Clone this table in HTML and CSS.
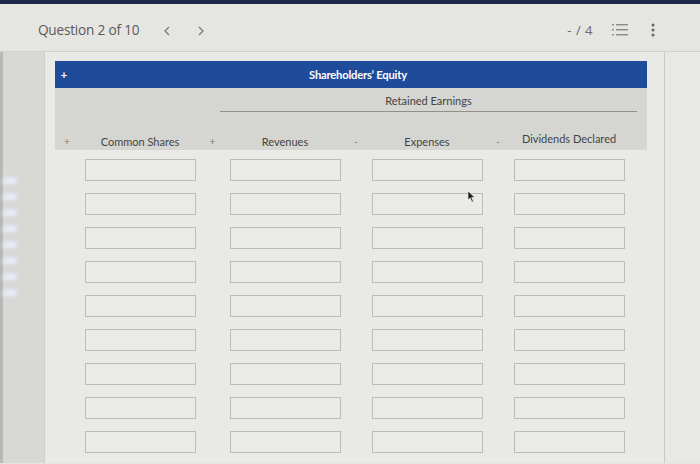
FILE: index.html
```html
<!DOCTYPE html>
<html>
<head>
<meta charset="utf-8">
<link rel="stylesheet" href="styles.css">
</head>
<body>
<div class="topbar"></div>
<header class="header">
  <div class="qtitle">Question 2 of 10</div>
  <svg class="chev" width="8" height="10" viewBox="0 0 8 10"><path d="M6 1 L2 5 L6 9" fill="none" stroke="#7a7a7a" stroke-width="1.3"/></svg>
  <svg class="chev chev2" width="8" height="10" viewBox="0 0 8 10"><path d="M2 1 L6 5 L2 9" fill="none" stroke="#7a7a7a" stroke-width="1.3"/></svg>
  <div class="spacer"></div>
  <div class="score">- / 4</div>
  <svg class="listicon" width="16" height="14" viewBox="0 0 16 14"><g fill="#8a8a8a"><rect x="0" y="1" width="2" height="1.4"/><rect x="0" y="6" width="2" height="1.4"/><rect x="0" y="11" width="2" height="1.4"/><rect x="4" y="1" width="12" height="1.4"/><rect x="4" y="6" width="12" height="1.4"/><rect x="4" y="11" width="12" height="1.4"/></g></svg>
  <svg class="kebab" width="4" height="14" viewBox="0 0 4 14"><g fill="#666"><circle cx="2" cy="2" r="1.5"/><circle cx="2" cy="7" r="1.5"/><circle cx="2" cy="12" r="1.5"/></g></svg>
</header>
<div class="main">
  <div class="gutter">
    <div class="glare"><span></span><span></span><span></span><span></span><span></span><span></span><span></span><span></span></div>
  </div>
  <section class="panel">
    <div class="ws">
      <div class="titlebar"><span class="tplus">+</span><span class="ttext">Shareholders’ Equity</span></div>
      <div class="subhead">
        <div class="re"><span>Retained Earnings</span></div>
        <div class="cols">
          <span class="sign">+</span><span class="lbl">Common Shares</span>
          <span class="sign">+</span><span class="lbl">Revenues</span>
          <span class="sign">-</span><span class="lbl">Expenses</span>
          <span class="sign">-</span><span class="lbl lbl4">Dividends Declared</span>
        </div>
      </div>
      <div class="rows">
        <div class="row"><span></span><i class="inp"></i><span></span><i class="inp"></i><span></span><i class="inp"></i><span></span><i class="inp"></i></div>
        <div class="row"><span></span><i class="inp"></i><span></span><i class="inp"></i><span></span><i class="inp"></i><span></span><i class="inp"></i></div>
        <div class="row"><span></span><i class="inp"></i><span></span><i class="inp"></i><span></span><i class="inp"></i><span></span><i class="inp"></i></div>
        <div class="row"><span></span><i class="inp"></i><span></span><i class="inp"></i><span></span><i class="inp"></i><span></span><i class="inp"></i></div>
        <div class="row"><span></span><i class="inp"></i><span></span><i class="inp"></i><span></span><i class="inp"></i><span></span><i class="inp"></i></div>
        <div class="row"><span></span><i class="inp"></i><span></span><i class="inp"></i><span></span><i class="inp"></i><span></span><i class="inp"></i></div>
        <div class="row"><span></span><i class="inp"></i><span></span><i class="inp"></i><span></span><i class="inp"></i><span></span><i class="inp"></i></div>
        <div class="row"><span></span><i class="inp"></i><span></span><i class="inp"></i><span></span><i class="inp"></i><span></span><i class="inp"></i></div>
        <div class="row"><span></span><i class="inp"></i><span></span><i class="inp"></i><span></span><i class="inp"></i><span></span><i class="inp"></i></div>
      </div>
      <svg class="cursor" width="9" height="13" viewBox="0 0 9 13"><path d="M1 1 L1 10 L3.2 8 L5 12 L6.4 11.4 L4.7 7.5 L7.8 7.5 Z" fill="#222" stroke="#eee" stroke-width="0.6"/></svg>
    </div>
  </section>
  <div class="rgutter"></div>
</div>
</body>
</html>
```
FILE: styles.css
```css
* { box-sizing: border-box; }
html, body { margin: 0; padding: 0; }
body {
  width: 700px;
  height: 464px;
  overflow: hidden;
  background: #e4e4e1;
  font-family: Lato, "Open Sans", sans-serif;
}
.topbar {
  height: 4px;
  background: #1d2747;
}
.header {
  height: 48px;
  display: flex;
  align-items: center;
  padding-top: 4px;
  padding-left: 38px;
  padding-right: 45px;
  background: #e5e5e1;
  border-bottom: 1px solid #cfcfcb;
  color: #5c5c5c;
  font-family: "Open Sans", sans-serif;
}
.qtitle { font-size: 13.6px; letter-spacing: -0.2px; color: #5a5a5a; }
.chev { margin-left: 24px; margin-top: 2px; }
.chev2 { margin-left: 26px; }
.spacer { flex: 1; }
.score { font-size: 13px; color: #6a6a6a; letter-spacing: 0.5px; }
.listicon { margin-left: 19px; }
.kebab { margin-left: 23px; }
.main {
  display: flex;
  height: 411px;
}
.gutter {
  width: 45px;
  background: #d8d8d5;
  border-left: 3px solid #b8b8b6;
  border-right: 1px solid #cdcdca;
  padding-top: 126px;
}
.glare {
  display: flex;
  flex-direction: column;
  gap: 10px;
  filter: blur(2px);
}
.glare span {
  display: block;
  width: 14px;
  height: 6px;
  background: #e8f2ff;
  opacity: 0.9;
}
.panel {
  width: 620px;
  background: #e9e9e6;
  border-right: 1px solid #c9c9c6;
  padding-top: 9px;
  padding-left: 10px;
}
.ws { width: 592px; position: relative; }
.titlebar {
  height: 27px;
  background: #1f4b9b;
  color: #fff;
  display: flex;
  align-items: center;
  position: relative;
}
.tplus {
  width: 18px;
  text-align: center;
  font-size: 11px;
  font-weight: 700;
}
.ttext {
  position: absolute;
  left: 0; right: 0;
  text-align: center;
  font-weight: 700;
  font-size: 11.2px;
  letter-spacing: -0.2px;
  padding-left: 14px;
}
.subhead {
  background: #d5d5d2;
  height: 62px;
  padding-top: 7px;
}
.re {
  margin-left: 165px;
  margin-right: 10px;
  border-bottom: 1px solid #8f8f8c;
  height: 17px;
  text-align: center;
  font-size: 11px;
  color: #444;
}
.re span { position: relative; top: -1px; }
.cols, .row {
  display: grid;
  grid-template-columns: 24px 122px 23px 122px 20px 122px 20px 122px;
  align-items: center;
}
.cols { height: 20px; margin-top: 19px; font-size: 11px; color: #444; }
.sign { text-align: center; color: #777; font-size: 10px; }
.lbl { text-align: center; }
.lbl4 { position: relative; top: -3px; }
.rows {
  display: flex;
  flex-direction: column;
  gap: 12px;
  padding-top: 9px;
}
.row { height: 22px; }
.inp {
  display: block;
  justify-self: center;
  width: 111px;
  height: 22px;
  border: 1.5px solid #bcbcb9;
  background: #eaeae7;
}
.cursor {
  position: absolute;
  left: 412px;
  top: 129px;
}
.rgutter {
  flex: 1;
  background: #e8e8e5;
}
```
